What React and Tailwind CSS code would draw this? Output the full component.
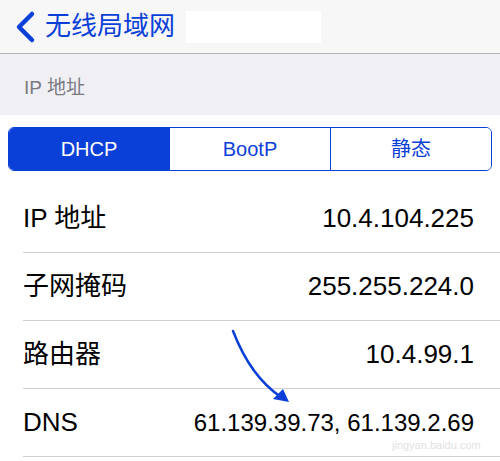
import React from "react";

const BLUE = "#0b40d8";

const rows = [
  { label: "IP 地址", value: "10.4.104.225" },
  { label: "子网掩码", value: "255.255.224.0" },
  { label: "路由器", value: "10.4.99.1" },
  { label: "DNS", value: "61.139.39.73, 61.139.2.69", small: true },
];

function Segments() {
  const items = ["DHCP", "BootP", "静态"];
  return (
    <div className="flex h-[44px] rounded-[6px] border border-[#0b40d8] overflow-hidden">
      {items.map((t, i) => (
        <div
          key={t}
          className={`flex-1 flex items-center justify-center text-[20px] ${
            i === 0 ? "bg-[#0b40d8] text-white" : "bg-white text-[#0b40d8]"
          } ${i > 0 ? "border-l border-[#0b40d8]" : ""}`}
        >
          {t}
        </div>
      ))}
    </div>
  );
}

export default function App() {
  return (
    <div
      className="relative w-[500px] h-[461px] overflow-hidden bg-white"
      style={{ fontFamily: '"Liberation Sans", "Noto Sans CJK SC", sans-serif' }}
    >
      {/* nav bar */}
      <div className="h-[54px] bg-[#f7f7f8] border-b border-[#b4b4b4] flex items-center">
        <svg width="40" height="40" viewBox="0 0 40 40" className="ml-[4px]">
          <polyline
            points="28,7 15,20 28,33"
            fill="none"
            stroke={BLUE}
            strokeWidth="4.5"
            strokeLinecap="round"
            strokeLinejoin="round"
          />
        </svg>
        <span className="ml-[1px] text-[26px] text-[#0b40d8] tracking-[0px]">无线局域网</span>
        <div className="ml-[11px] w-[135px] h-[32px] bg-white" />
      </div>

      {/* section header */}
      <div className="h-[61px] bg-[#efeff4] flex items-end pl-[24px] pb-[13px]">
        <span className="text-[19px] text-[#7a7a7f]">IP 地址</span>
      </div>

      <div className="px-[8px] pt-[12px] pb-[14px]">
        <Segments />
      </div>

      <div className="pl-[23px]">
        {rows.map((r) => (
          <div
            key={r.label}
            className="h-[68px] border-b border-[#d0d0d4] flex items-center justify-between pr-[26px]"
          >
            <span className="text-[26px] text-black">{r.label}</span>
            <span className={`${r.small ? "text-[24px]" : "text-[26px]"} text-black`}>{r.value}</span>
          </div>
        ))}
      </div>

      {/* annotation arrow */}
      <svg className="absolute left-0 top-0" width="500" height="461" viewBox="0 0 500 461">
        <path d="M233 331 C 245 362, 260 383, 281 397" fill="none" stroke={BLUE} strokeWidth="2.5" strokeLinecap="round" />
        <polygon points="289,402 273,399 283,389" fill={BLUE} />
      </svg>

      {/* watermark */}
      <span className="absolute left-[392px] top-[437px] text-[11px] text-[#e2e2e2]">jingyan.baidu.com</span>
    </div>
  );
}
